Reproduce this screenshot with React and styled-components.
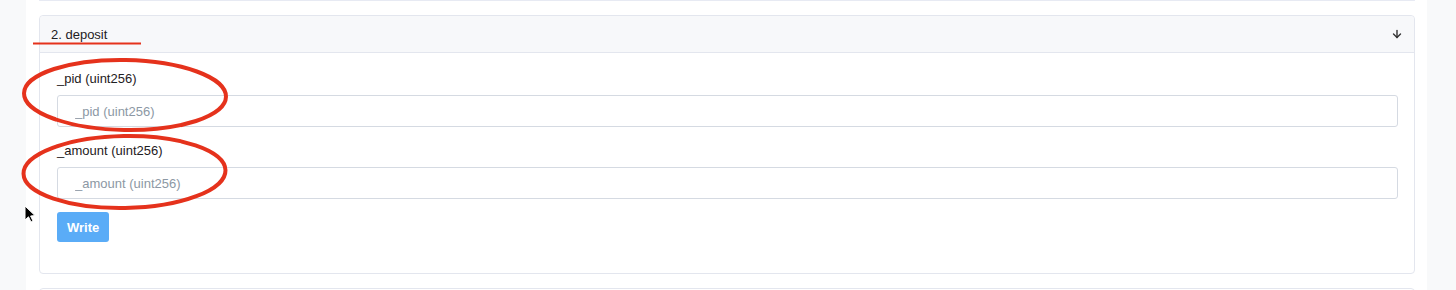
import React from "react";
import styled, { createGlobalStyle } from "styled-components";
import { ArrowDown } from "lucide-react";

const GlobalStyle = createGlobalStyle`
  body {
    margin: 0;
    background: #f8f9fa;
    font-family: "Liberation Sans", Arial, sans-serif;
    color: #1e2022;
  }
`;

const Page = styled.div`
  position: relative;
  display: flex;
  height: 290px;
  overflow: hidden;
`;

const Gutter = styled.div`
  width: ${(p) => p.w}px;
  flex-shrink: 0;
  background: #f8f9fa;
`;

const Panel = styled.div`
  flex: 1;
  background: #fff;
  padding: 0 12px 0 13px;
  display: flex;
  flex-direction: column;
  gap: 14px;
`;

const CardStub = styled.div`
  height: 5px;
  border: 1px solid #e7eaf3;
  border-top: none;
  border-radius: 0 0 4px 4px;
`;

const Card = styled.div`
  border: 1px solid #e3e6ee;
  border-radius: 4px;
  background: #fff;
  flex-shrink: 0;
`;

const CardHeader = styled.div`
  height: 36px;
  display: flex;
  align-items: center;
  justify-content: space-between;
  padding: 0 11px;
  background: #f7f8fa;
  border-bottom: 1px solid #e3e6ee;
  border-radius: 4px 4px 0 0;
  font-size: 13px;
  color: #1e2022;
`;

const CardBody = styled.div`
  padding: 16px 16px 31px 17px;
`;

const Field = styled.div`
  margin-bottom: ${(p) => (p.last ? 13 : 14)}px;
`;

const Label = styled.label`
  display: block;
  font-size: 13px;
  line-height: 20px;
  margin-bottom: 6px;
  color: #1e2022;
`;

const Input = styled.input`
  box-sizing: border-box;
  display: block;
  width: 100%;
  height: 32px;
  padding: 0 17px;
  border: 1px solid #d5dae2;
  border-radius: 3px;
  font-family: inherit;
  font-size: 13px;
  color: #1e2022;
  outline: none;
  &::placeholder {
    color: #8c98a4;
  }
`;

const WriteButton = styled.button`
  height: 30px;
  padding: 0 10px;
  border: none;
  border-radius: 3px;
  background: #5aacf7;
  color: #fff;
  font-family: inherit;
  font-size: 13px;
  font-weight: 600;
`;

const Overlay = styled.svg`
  position: absolute;
  inset: 0;
  pointer-events: none;
`;

const App = () => (
  <>
    <GlobalStyle />
    <Page>
      <Gutter w={26} />
      <Panel>
        <CardStub />
        <Card>
          <CardHeader>
            <span>2. deposit</span>
            <ArrowDown size={12} strokeWidth={2.8} color="#333" />
          </CardHeader>
          <CardBody>
            <Field>
              <Label>_pid (uint256)</Label>
              <Input placeholder="_pid (uint256)" />
            </Field>
            <Field last>
              <Label>_amount (uint256)</Label>
              <Input placeholder="_amount (uint256)" />
            </Field>
            <WriteButton>Write</WriteButton>
          </CardBody>
        </Card>
        <Card style={{ height: 20 }} />
      </Panel>
      <Gutter w={29} />
      <Overlay width="1456" height="290" viewBox="0 0 1456 290">
        <line x1="33" y1="43.5" x2="141" y2="43.5" stroke="#e5321c" strokeWidth="2" />
        <ellipse cx="125" cy="95" rx="101" ry="35" fill="none" stroke="#e5321c" strokeWidth="4" transform="rotate(1 125 95)" />
        <ellipse cx="124.5" cy="172" rx="101" ry="36" fill="none" stroke="#e5321c" strokeWidth="4" transform="rotate(-1 124 172)" />
        <path d="M25 206 L25 220 L28.5 216.8 L31 222 L33 221 L30.6 216 L35 215.6 Z" fill="#000" stroke="#fff" strokeWidth="1" />
      </Overlay>
    </Page>
  </>
);

export default App;
